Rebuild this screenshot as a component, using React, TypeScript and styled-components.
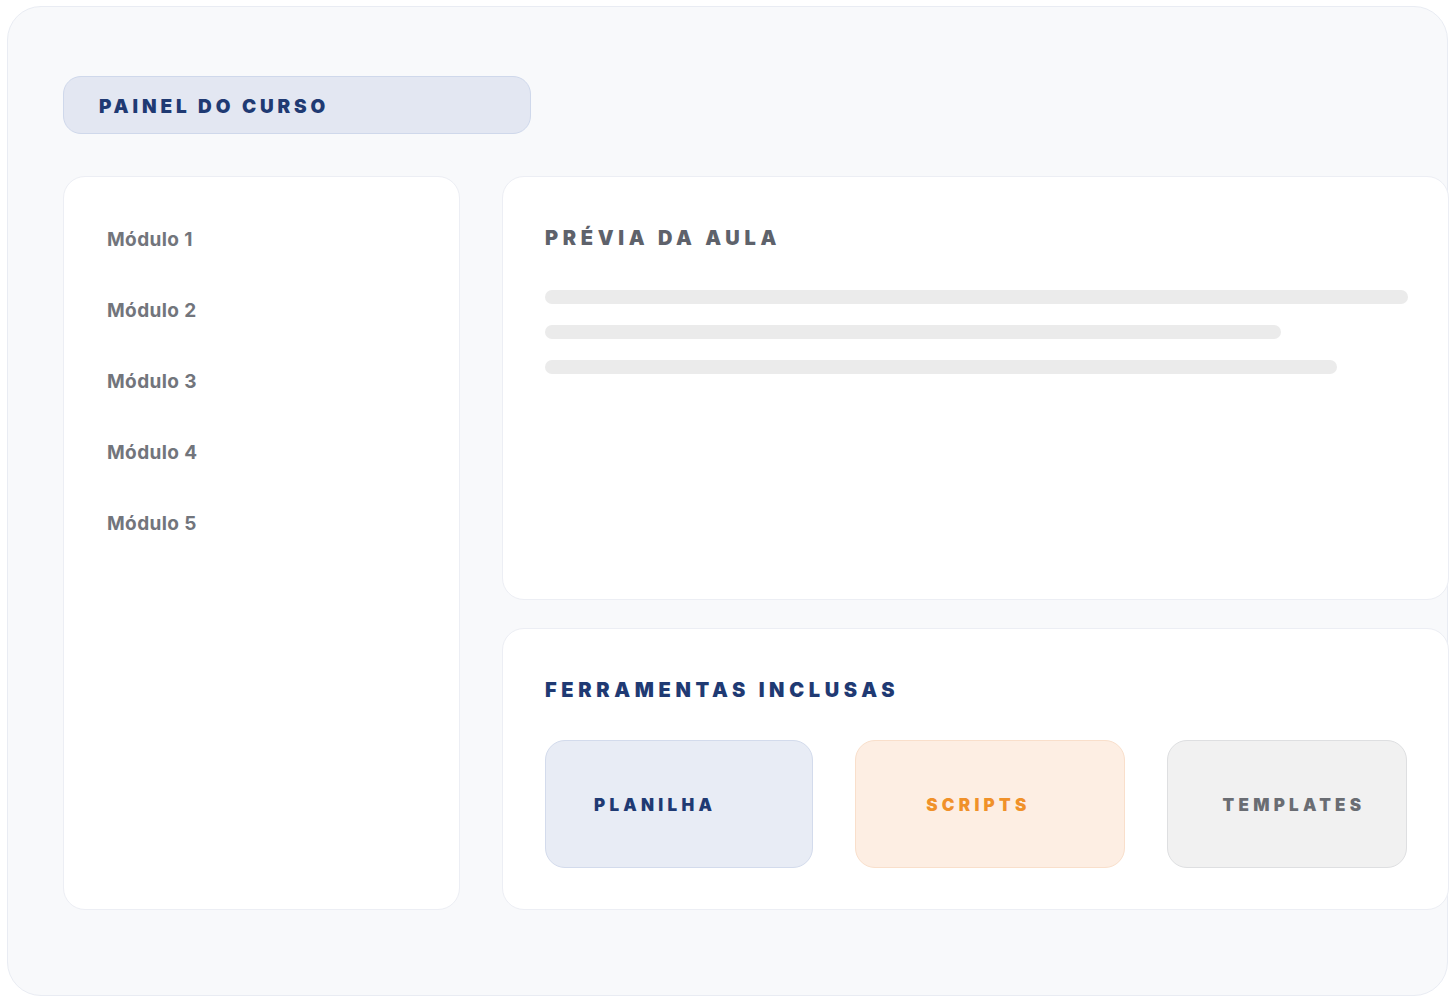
import React from "react";
import styled, { createGlobalStyle } from "styled-components";

const Global = createGlobalStyle`
  html, body { margin: 0; padding: 0; background: #ffffff; }
  body { font-family: Inter, "Noto Sans", "Liberation Sans", sans-serif; }
  * { box-sizing: border-box; }
`;

const Page = styled.div`
  padding: 6px 7px;
  width: 1455px;
  height: 1000px;
  overflow: hidden;
`;

const Frame = styled.div`
  width: 1441px;
  height: 990px;
  background: #f8f9fb;
  border: 1px solid #e9ecf3;
  border-radius: 34px;
  padding: 69px 0 0 55px;
  display: flex;
  flex-direction: column;
  gap: 42px;
`;

const Pill = styled.div`
  width: 468px;
  height: 58px;
  background: #e3e7f2;
  border: 1px solid #cfd8eb;
  border-radius: 18px;
  display: flex;
  align-items: center;
  padding: 3px 0 0 35px;
  font-weight: 900;
  font-size: 19px;
  letter-spacing: 3.85px;
  color: #1f3a73;
`;

const Grid = styled.div`
  display: grid;
  grid-template-columns: 397px 947px;
  column-gap: 42px;
`;

const Card = styled.div`
  background: #ffffff;
  border: 1px solid #eceef4;
  border-radius: 22px;
`;

const Sidebar = styled(Card)`
  height: 734px;
  padding: 51px 0 0 43px;
  display: flex;
  flex-direction: column;
  gap: 47px;
`;

const ModuleItem = styled.div`
  font-size: 19px;
  line-height: 24px;
  font-weight: 700;
  letter-spacing: 0.4px;
  color: #72757c;
`;

const RightCol = styled.div`
  display: flex;
  flex-direction: column;
  gap: 28px;
`;

const Preview = styled(Card)`
  height: 424px;
  padding: 49px 41px 0 42px;
`;

const Tools = styled(Card)`
  height: 282px;
  padding: 49px 41px 0 42px;
`;

const SectionTitle = styled.div<{ $color: string }>`
  font-size: 20px;
  line-height: 24px;
  font-weight: 900;
  letter-spacing: 4.65px;
  color: ${(p) => p.$color};
`;

const Bars = styled.div`
  margin-top: 40px;
  display: flex;
  flex-direction: column;
  gap: 21px;
`;

const Bar = styled.div`
  height: 14px;
  border-radius: 7px;
  background: #ebebeb;
`;

const ToolRow = styled.div`
  margin-top: 38px;
  display: flex;
  gap: 42px;
`;

const ToolCard = styled.div<{ $bg: string; $border: string; $color: string; $w: number; $inset: number }>`
  width: ${(p) => p.$w}px;
  height: 128px;
  border-radius: 20px;
  background: ${(p) => p.$bg};
  border: 1.5px solid ${(p) => p.$border};
  color: ${(p) => p.$color};
  display: flex;
  align-items: center;
  padding: 2px 0 0 ${(p) => p.$inset}px;
  font-size: 17px;
  font-weight: 900;
  letter-spacing: 4.25px;
`;

const modules = ["Módulo 1", "Módulo 2", "Módulo 3", "Módulo 4", "Módulo 5"];

const bars = [863, 736, 792];

const tools = [
  { label: "PLANILHA", bg: "#e8ecf5", border: "#d3dbec", color: "#1f3a73", w: 269, inset: 48 },
  { label: "SCRIPTS", bg: "#fdeee3", border: "#f9dfcb", color: "#f0912a", w: 270, inset: 70 },
  { label: "TEMPLATES", bg: "#f1f1f1", border: "#dedfe1", color: "#6a6d73", w: 241, inset: 55 },
];

export default function App() {
  return (
    <Page>
      <Global />
      <Frame>
        <Pill>PAINEL DO CURSO</Pill>
        <Grid>
          <Sidebar>
            {modules.map((m) => (
              <ModuleItem key={m}>{m}</ModuleItem>
            ))}
          </Sidebar>
          <RightCol>
            <Preview>
              <SectionTitle $color="#5e626b">PRÉVIA DA AULA</SectionTitle>
              <Bars>
                {bars.map((w, i) => (
                  <Bar key={i} style={{ width: w }} />
                ))}
              </Bars>
            </Preview>
            <Tools>
              <SectionTitle $color="#1f3a73">FERRAMENTAS INCLUSAS</SectionTitle>
              <ToolRow>
                {tools.map((t) => (
                  <ToolCard key={t.label} $bg={t.bg} $border={t.border} $color={t.color} $w={t.w} $inset={t.inset}>
                    {t.label}
                  </ToolCard>
                ))}
              </ToolRow>
            </Tools>
          </RightCol>
        </Grid>
      </Frame>
    </Page>
  );
}
